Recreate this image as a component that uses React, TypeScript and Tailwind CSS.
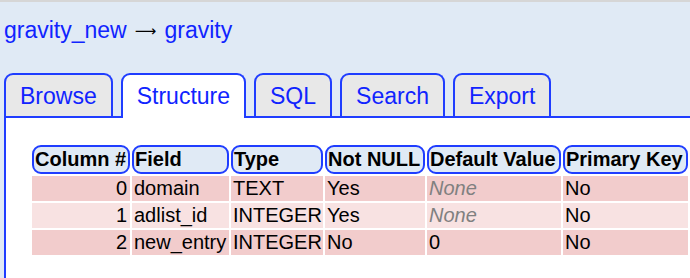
import React from "react";

const tabs = ["Browse", "Structure", "SQL", "Search", "Export"];

const cols = [
  { name: "Column #", w: "w-[98px]" },
  { name: "Field", w: "w-[97px]" },
  { name: "Type", w: "w-[92px]" },
  { name: "Not NULL", w: "w-[100px]" },
  { name: "Default Value", w: "w-[134px]" },
  { name: "Primary Key", w: "w-[125px]" },
];

const rows = [
  { n: "0", field: "domain", type: "TEXT", nn: "Yes", def: null, pk: "No" },
  { n: "1", field: "adlist_id", type: "INTEGER", nn: "Yes", def: null, pk: "No" },
  { n: "2", field: "new_entry", type: "INTEGER", nn: "No", def: "0", pk: "No" },
];

export default function App() {
  return (
    <div
      className="w-[690px] h-[278px] overflow-hidden bg-[#e0eaf5] border-t-2 border-[#d6d6d6]"
      style={{ fontFamily: '"Liberation Sans", Arial, sans-serif' }}
    >
      <div className="w-[720px] pl-[4px]">
        <h1 className="mt-[15px] h-[26px] text-[23px] leading-[26px] font-normal text-black whitespace-nowrap">
          <span className="text-[#1024ff]">gravity_new</span>{" "}
          <span className="inline-block w-[25px] h-[26px] align-top text-center text-[15px] leading-[28px] [font-family:'DejaVu_Sans',sans-serif]">
            ⟶
          </span>{" "}
          <span className="text-[#1024ff]">gravity</span>
        </h1>
        <div className="mt-[30px] flex items-end gap-[8px]">
          {tabs.map((t) => {
            const active = t === "Structure";
            return (
              <div
                key={t}
                className={
                  "relative z-10 border-2 border-b-0 border-[#1f3dff] rounded-t-[9px] px-[14px] pt-[8px] text-[23px] leading-[26px] text-[#1024ff] whitespace-nowrap " +
                  (active ? "bg-white pb-[9px] -mb-[2px]" : "bg-[#e8e8e8] pb-[7px]")
                }
              >
                {t}
              </div>
            );
          })}
        </div>
        <div className="bg-white border-t-2 border-l-2 border-[#1f3dff] h-[200px] pl-[24px] pt-[25px]">
          <table className="table-fixed border-separate border-spacing-[2px] w-[660px] text-[20px] leading-[23px] text-black">
            <thead>
              <tr>
                {cols.map((c) => (
                  <th
                    key={c.name}
                    className={
                      c.w +
                      " text-left font-bold bg-[#e0eaf5] border-2 border-[#1f3dff] rounded-[9px] px-[1px] py-[1px] whitespace-nowrap overflow-hidden"
                    }
                  >
                    {c.name}
                  </th>
                ))}
              </tr>
            </thead>
            <tbody>
              {rows.map((r, i) => {
                const bg = i % 2 === 0 ? "bg-[#f2cccc]" : "bg-[#f8e2e2]";
                const td = bg + " py-[1px] pl-[2px] pr-[3px] whitespace-nowrap";
                return (
                  <tr key={r.n}>
                    <td className={td + " text-right"}>{r.n}</td>
                    <td className={td}>{r.field}</td>
                    <td className={td}>{r.type}</td>
                    <td className={td}>{r.nn}</td>
                    <td className={td}>
                      {r.def === null ? (
                        <span className="italic text-[#808080]">None</span>
                      ) : (
                        r.def
                      )}
                    </td>
                    <td className={td}>{r.pk}</td>
                  </tr>
                );
              })}
            </tbody>
          </table>
        </div>
      </div>
    </div>
  );
}
